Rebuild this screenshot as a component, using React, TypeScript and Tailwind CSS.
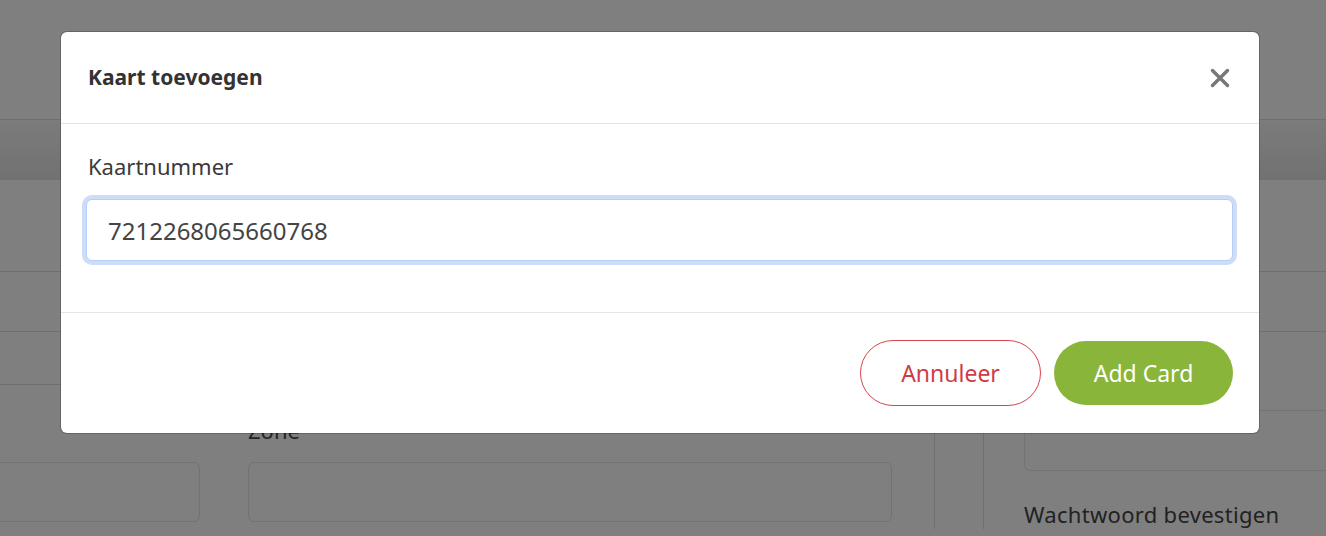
import { useState } from "react";

function CloseIcon() {
  return (
    <svg width="20" height="20" viewBox="0 0 20 20" fill="none">
      <path d="M2.5 2.5 L17.5 17.5 M17.5 2.5 L2.5 17.5" stroke="#777777" strokeWidth="3.4" strokeLinecap="round" />
    </svg>
  );
}

function BackgroundPage() {
  return (
    <div className="h-[536px] w-full overflow-hidden bg-white text-[#4a4a4a]">
      <div className="h-[120px] border-b border-[#dedede]" />
      <div className="h-[60px] bg-gradient-to-b from-[#f7f7f7] to-[#e3e3e3]" />
      <div className="flex">
        <div className="w-[934px] shrink-0">
          <div className="h-[92px] border-b border-[#dedede]" />
          <div className="h-[60px] border-b border-[#dedede]" />
          <div className="h-[53px] border-b border-[#dedede]" />
          <div className="grid grid-cols-[200px_644px] gap-x-[48px] pt-[30px]">
            <div className="h-[30px]" />
            <div className="h-[30px] text-[22px] leading-[30px]">Zone</div>
            <div className="-ml-[20px] mt-[17px] h-[60px] rounded-[6px] border border-[#e6e6e6]" />
            <div className="mt-[17px] h-[60px] rounded-[6px] border border-[#e6e6e6]" />
          </div>
        </div>
        <div className="w-[49px] shrink-0 border-l border-[#dedede]" />
        <div className="flex-1 border-l border-[#dedede]">
          <div className="h-[92px] border-b border-[#dedede]" />
          <div className="h-[60px] border-b border-[#dedede]" />
          <div className="pl-[40px]">
            <div className="mt-[78px] h-[61px] rounded-l-[6px] border border-r-0 border-[#e6e6e6]" />
            <div className="mt-[28px] whitespace-nowrap text-[22px] leading-[30px] tracking-[0.3px] text-[#444]">
              Wachtwoord bevestigen
            </div>
          </div>
        </div>
      </div>
    </div>
  );
}

export default function App() {
  const [value, setValue] = useState("7212268065660768");

  return (
    <div className="relative h-[536px] w-[1326px] overflow-hidden font-['Noto_Sans',sans-serif]">
      <BackgroundPage />
      <div className="absolute inset-0 bg-black/50">
        <div className="ml-[61px] mt-[32px] w-[1198px] rounded-[6px] bg-white shadow-[0_0_0_1px_rgba(0,0,0,0.2)]">
          <div className="flex h-[92px] items-center justify-between border-b border-[#e5e5e5] pl-[27px] pr-[27px]">
            <h2 className="text-[21px] font-bold text-[#333]">Kaart toevoegen</h2>
            <button className="flex h-[24px] w-[24px] items-center justify-center">
              <CloseIcon />
            </button>
          </div>
          <div className="pl-[25px] pr-[26px] pb-[51px] pt-[27px]">
            <label className="block pl-[2px] text-[22px] leading-[30px] text-[#3a3a3a]">Kaartnummer</label>
            <input
              value={value}
              onChange={(e) => setValue(e.target.value)}
              className="mt-[18px] h-[62px] w-full rounded-[6px] border border-[#b7cdf4] bg-white pl-[21px] text-[24px] text-[#444] shadow-[0_0_0_4px_#cddcf7] outline-none"
            />
          </div>
          <div className="flex h-[121px] items-center justify-end gap-[13px] border-t border-[#e5e5e5] pr-[26px]">
            <button className="h-[66px] w-[181px] rounded-full border border-[#d9434b] text-[23px] text-[#d03c44]">
              Annuleer
            </button>
            <button className="h-[64px] w-[179px] rounded-full bg-[#89b53a] text-[23px] text-white">
              Add Card
            </button>
          </div>
        </div>
      </div>
    </div>
  );
}
